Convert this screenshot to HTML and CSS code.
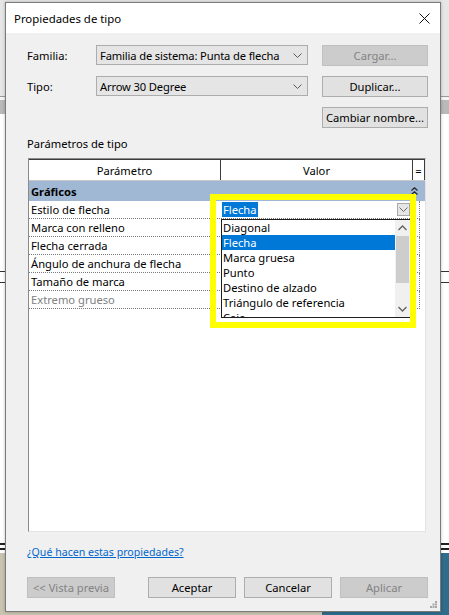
FILE: index.html
```html
<!DOCTYPE html>
<html lang="es">
<head>
<meta charset="utf-8">
<title>Propiedades de tipo</title>
<link rel="stylesheet" href="styles.css">
</head>
<body>
<div class="desktop">
  <div class="window">
    <div class="titlebar">
      <span class="title">Propiedades de tipo</span>
      <svg class="close" width="11" height="11" viewBox="0 0 11 11"><path d="M0.5 0.5 L10.5 10.5 M10.5 0.5 L0.5 10.5" stroke="#111" stroke-width="1" fill="none"/></svg>
    </div>
    <div class="content">
      <div class="topgrid">
        <span class="lbl">Familia:</span>
        <div class="combo"><span>Familia de sistema: Punta de flecha</span><svg class="chev" width="9" height="5" viewBox="0 0 9 5"><path d="M0.5 0.5 L4.5 4.5 L8.5 0.5" stroke="#5a5a5a" fill="none"/></svg></div>
        <button class="btn" disabled>Cargar...</button>
        <span class="lbl">Tipo:</span>
        <div class="combo"><span>Arrow 30 Degree</span><svg class="chev" width="9" height="5" viewBox="0 0 9 5"><path d="M0.5 0.5 L4.5 4.5 L8.5 0.5" stroke="#5a5a5a" fill="none"/></svg></div>
        <button class="btn">Duplicar...</button>
        <span></span><span></span>
        <button class="btn">Cambiar nombre...</button>
      </div>

      <div class="sectionlbl">Parámetros de tipo</div>

      <div class="grid">
        <div class="ghead">
          <div class="hc hparam">Parámetro</div>
          <div class="hc hval">Valor</div>
          <div class="hc heq">=</div>
        </div>
        <div class="group">
          <span>Gráficos</span>
          <svg class="collapse" width="7" height="8" viewBox="0 0 7 8"><path d="M0.5 3.5 L3.5 0.8 L6.5 3.5 M0.5 7.5 L3.5 4.8 L6.5 7.5" stroke="#222" stroke-width="1.2" fill="none"/></svg>
        </div>
        <div class="row"><div class="pc">Estilo de flecha</div><div class="vc">
          <span class="sel">Flecha</span>
          <span class="ddbtn"><svg width="9" height="5" viewBox="0 0 9 5"><path d="M0.5 0.5 L4.5 4.5 L8.5 0.5" stroke="#6a6a6a" fill="none"/></svg></span>
        </div></div>
        <div class="row"><div class="pc">Marca con relleno</div><div class="vc"></div></div>
        <div class="row"><div class="pc">Flecha cerrada</div><div class="vc"></div></div>
        <div class="row"><div class="pc">Ángulo de anchura de flecha</div><div class="vc"></div></div>
        <div class="row"><div class="pc">Tamaño de marca</div><div class="vc"></div></div>
        <div class="row dis"><div class="pc">Extremo grueso</div><div class="vc"></div></div>

        <div class="droplist">
          <ul class="items">
            <li>Diagonal</li>
            <li class="on">Flecha</li>
            <li>Marca gruesa</li>
            <li>Punto</li>
            <li>Destino de alzado</li>
            <li>Triángulo de referencia</li>
            <li>Caja</li>
          </ul>
          <div class="vscroll">
            <svg class="sarrow" width="9" height="6" viewBox="0 0 9 6"><path d="M0.5 5 L4.5 1 L8.5 5" stroke="#606060" stroke-width="1.3" fill="none"/></svg>
            <div class="thumb"></div>
            <div class="track"></div>
            <svg class="sarrow" width="9" height="6" viewBox="0 0 9 6"><path d="M0.5 1 L4.5 5 L8.5 1" stroke="#606060" stroke-width="1.3" fill="none"/></svg>
          </div>
        </div>
        <div class="highlight"></div>
      </div>

      <a class="help" href="#">¿Qué hacen estas propiedades?</a>

      <div class="footer">
        <button class="btn" disabled>&lt;&lt; Vista previa</button>
        <div class="right">
          <button class="btn">Aceptar</button>
          <button class="btn">Cancelar</button>
          <button class="btn" disabled>Aplicar</button>
        </div>
      </div>
      <svg class="grip" width="7" height="7" viewBox="0 0 7 7"><g fill="#a8a8a8"><rect x="5" y="0" width="2" height="2"/><rect x="2.5" y="2.5" width="2" height="2"/><rect x="5" y="2.5" width="2" height="2"/><rect x="0" y="5" width="2" height="2"/><rect x="2.5" y="5" width="2" height="2"/><rect x="5" y="5" width="2" height="2"/></g></svg>
    </div>
  </div>
</div>
</body>
</html>
```

FILE: styles.css
```css
* { box-sizing: border-box; }
html, body { margin: 0; padding: 0; }
body {
  width: 449px;
  height: 615px;
  overflow: hidden;
  font-family: "Noto Sans", "Open Sans", "Liberation Sans", sans-serif;
  font-size: 11.2px;
  color: #000;
}
.desktop {
  position: relative;
  width: 449px;
  height: 615px;
  background:
    linear-gradient(#2f6d8c, #2f6d8c) right bottom / 127px 62px no-repeat,
    linear-gradient(#c9c3b1, #c9c3b1) left bottom / 322px 62px no-repeat,
    linear-gradient(to bottom, #e6e6e6 0, #e6e6e6 96px, #9a9a9a 96px, #9a9a9a 97px, #f4f4f4 97px, #f4f4f4 100px, #b9b9b9 100px, #b9b9b9 114px, #ffffff 114px, #ffffff 271px, #333 271px, #333 272px, #fff 272px, #fff 282px, #333 282px, #333 283px, #fff 283px, #fff 543px, #222 543px, #222 545px, #fff 545px, #fff 548px, #222 548px, #222 550px, #fff 550px);
}
.window {
  position: absolute;
  left: 5px;
  top: 2px;
  width: 436px;
  height: 610px;
  border: 1px solid #7a7a7a;
  background: #f0f0f0;
  display: flex;
  flex-direction: column;
  box-shadow: 0 0 3px rgba(0,0,0,0.25);
}
.titlebar {
  height: 30px;
  background: #fff;
  display: flex;
  align-items: center;
  justify-content: space-between;
  padding: 0 10px 0 8px;
  flex: none;
}
.title { font-size: 11.4px; }
.close { display: block; }
.content {
  position: relative;
  flex: 1;
  padding: 12px 12px 13px 21px;
  display: flex;
  flex-direction: column;
}
.topgrid {
  display: grid;
  grid-template-columns: 69px 212px 1fr;
  grid-auto-rows: 21px;
  row-gap: 10px;
  align-items: center;
}
.combo {
  height: 20px;
  align-self: start;
  background: #e5e5e5;
  border: 1px solid #acacac;
  display: flex;
  align-items: center;
  justify-content: space-between;
  padding: 0 5px 0 3px;
  white-space: nowrap;
  overflow: hidden;
}
.combo span { letter-spacing: -0.15px; }
.chev { display: block; flex: none; }
.btn {
  font: inherit;
  color: #000;
  width: 106px;
  height: 21px;
  justify-self: end;
  background: #e1e1e1;
  border: 1px solid #adadad;
  padding: 0;
  margin: 0;
  white-space: nowrap;
}
.btn:disabled {
  background: #cccccc;
  border-color: #bfbfbf;
  color: #838383;
}
.sectionlbl {
  margin-top: 8px;
  line-height: 16px;
}
.grid {
  position: relative;
  margin-top: 6px;
  margin-left: 1px;
  width: 398px;
  height: 374px;
  background: #fff;
  border: 1px solid;
  border-color: #8a8a8a #e3e3e3 #e3e3e3 #8a8a8a;
}
.ghead {
  display: flex;
  height: 22px;
  border-top: 1px solid #3c3c3c;
  border-bottom: 1px solid #c8c8c8;
}
.hc {
  display: flex;
  align-items: center;
  justify-content: center;
  border-right: 1px solid #3c3c3c;
}
.hparam { width: 192px; }
.hval { width: 192px; }
.heq { width: 12px; }
.group {
  height: 20px;
  background: #a0b8d3;
  display: flex;
  align-items: center;
  justify-content: space-between;
  padding: 0 7px 0 2px;
  font-weight: bold;
}
.row {
  display: flex;
  height: 18px;
  border-bottom: 1px dotted #7a7a7a;
  width: 391px;
  border-right: 1px dotted #7a7a7a;
}
.pc {
  width: 192px;
  padding-left: 2px;
  line-height: 17px;
  white-space: nowrap;
}
.vc {
  flex: 1;
  position: relative;
  display: flex;
  align-items: center;
  justify-content: space-between;
  padding: 0 0 0 1px;
}
.dis .pc { color: #808080; }
.sel {
  background: #0078d7;
  color: #fff;
  line-height: 15px;
  padding: 0 1px;
}
.ddbtn {
  width: 13px;
  height: 13px;
  margin-right: 9px;
  background: #e6e6e6;
  border: 1px solid #a8a8a8;
  display: flex;
  align-items: center;
  justify-content: center;
}
.ddbtn svg { display: block; }
.droplist {
  position: absolute;
  left: 192px;
  top: 60px;
  width: 190px;
  height: 99px;
  background: #fff;
  border: 1px solid #1e1e1e;
  display: flex;
  overflow: hidden;
}
.items {
  list-style: none;
  margin: 0;
  padding: 0;
  flex: 1;
}
.items li {
  height: 15px;
  line-height: 15px;
  padding-left: 1px;
  white-space: nowrap;
}
.items li.on { background: #0078d7; color: #fff; }
.vscroll {
  width: 15px;
  background: #f0f0f0;
  display: flex;
  flex-direction: column;
  align-items: center;
}
.sarrow { display: block; margin: 5px 0 5px; flex: none; }
.thumb { width: 13px; height: 47px; background: #cdcdcd; flex: none; }
.track { flex: 1; }
.highlight {
  position: absolute;
  left: 181px;
  top: 35px;
  width: 206px;
  height: 134px;
  border: 6px solid #ffff00;
  pointer-events: none;
}
.help {
  margin-top: 12px;
  line-height: 16px;
  font-size: 10.6px;
  color: #0066cc;
  text-decoration: underline;
  align-self: flex-start;
}
.footer {
  margin-top: 17px;
  display: flex;
  justify-content: space-between;
}
.footer .btn { width: 88px; }
.right { display: flex; gap: 8px; }
.grip {
  position: absolute;
  right: 3px;
  bottom: 3px;
  display: block;
}
```
